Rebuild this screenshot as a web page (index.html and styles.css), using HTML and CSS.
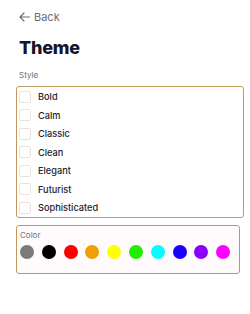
FILE: index.html
```html
<!DOCTYPE html>
<html>
<head>
<meta charset="utf-8">
<link rel="stylesheet" href="styles.css">
</head>
<body>
<div class="page">
  <a class="back">
    <svg width="11" height="10" viewBox="0 0 11 10"><path d="M5 1 L1 5 L5 9 M1 5 H10.5" fill="none" stroke="#6b6b78" stroke-width="1.1" stroke-linecap="round" stroke-linejoin="round"/></svg>
    <span>Back</span>
  </a>
  <h1 class="title">Theme</h1>
  <div class="label">Style</div>
  <div class="box style-box">
    <label class="row"><span class="check"></span><span>Bold</span></label>
    <label class="row"><span class="check"></span><span>Calm</span></label>
    <label class="row"><span class="check"></span><span>Classic</span></label>
    <label class="row"><span class="check"></span><span>Clean</span></label>
    <label class="row"><span class="check"></span><span>Elegant</span></label>
    <label class="row"><span class="check"></span><span>Futurist</span></label>
    <label class="row"><span class="check"></span><span>Sophisticated</span></label>
  </div>
  <div class="box color-box">
    <div class="label inner">Color</div>
    <div class="swatches">
      <span class="dot" style="background:#7a7a7a"></span>
      <span class="dot" style="background:#000000"></span>
      <span class="dot" style="background:#ff0000"></span>
      <span class="dot" style="background:#f0a000"></span>
      <span class="dot" style="background:#ffff00"></span>
      <span class="dot" style="background:#22ee00"></span>
      <span class="dot" style="background:#00ffff"></span>
      <span class="dot" style="background:#1a00ff"></span>
      <span class="dot" style="background:#8a00ff"></span>
      <span class="dot" style="background:#ff00ff"></span>
    </div>
  </div>
</div>
</body>
</html>
```
FILE: styles.css
```css
html, body { margin: 0; padding: 0; background: #ffffff; }
body { font-family: Inter, "Noto Sans", sans-serif; color: #1c1c2b; }
.page { padding: 11px 6px 0 16px; width: 228px; }
.back { display: flex; align-items: center; gap: 4px; color: #6b6b78; font-size: 11px; margin-left: 3px; height: 12px; }
.title { margin: 14px 0 0 3px; font-size: 18px; font-weight: 800; color: #14142a; line-height: 22px; letter-spacing: -0.2px; }
.label { font-size: 8px; color: #6e6e78; margin: 11px 0 0 3px; line-height: 10px; }
.box { border: 1.3px solid #c0995a; border-radius: 3px; box-sizing: border-box; }
.style-box { margin-top: 6px; width: 228px; height: 132px; padding: 0 0 0 2px; display: flex; flex-direction: column; justify-content: center; }
.row { display: flex; align-items: center; height: 18.5px; gap: 7px; font-size: 9.2px; font-weight: 500; color: #23232f; }
.check { width: 12px; height: 12px; border: 1px solid #f0dde2; border-radius: 2px; box-sizing: border-box; background: #fff; }
.color-box { margin-top: 7px; width: 224px; height: 49px; background: #fffbfd; }
.label.inner { margin: 4px 0 0 3px; }
.swatches { display: flex; gap: 7.8px; margin: 5px 0 0 3px; }
.dot { width: 14px; height: 14px; border-radius: 50%; display: block; }
```
